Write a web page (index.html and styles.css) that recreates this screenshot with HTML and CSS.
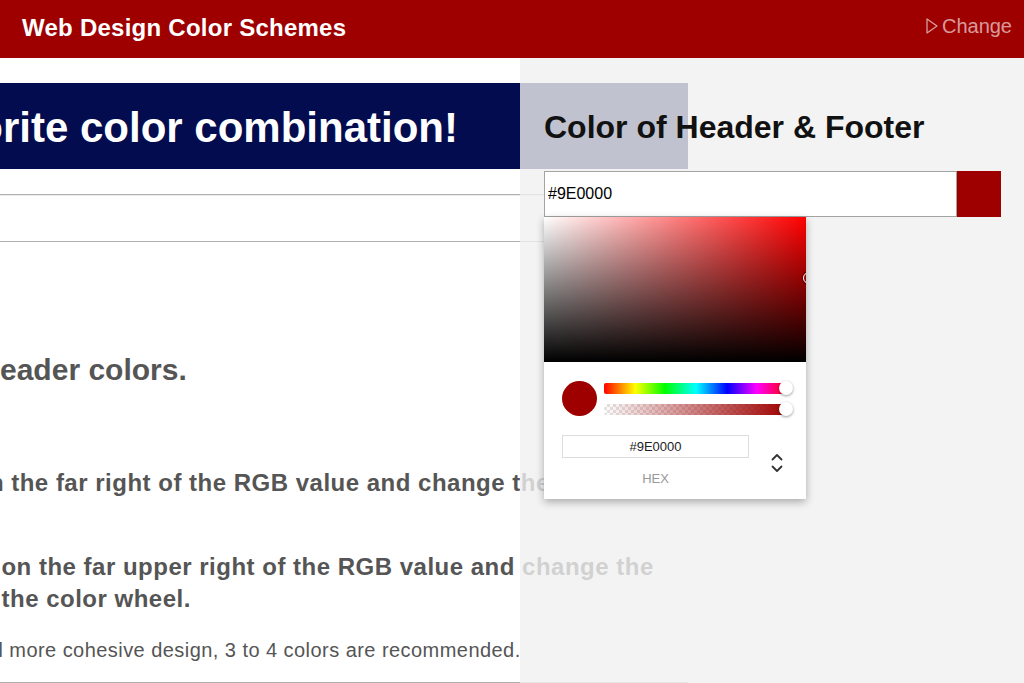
FILE: index.html
```html
<!DOCTYPE html>
<html lang="en">
<head>
<meta charset="utf-8">
<title>Web Design Color Schemes</title>
<link rel="stylesheet" href="styles.css">
</head>
<body>
<header class="topbar">
  <div class="brand">Web Design Color Schemes</div>
  <a class="change" href="#">
    <svg class="change-icon" width="12" height="16" viewBox="0 0 12 16" aria-hidden="true"><path d="M1 1 L11 8 L1 15 Z" fill="none" stroke="currentColor" stroke-width="1.3" stroke-linejoin="round"/></svg>
    <span>Change</span>
  </a>
</header>

<main class="content">
  <div class="banner"><h1 class="banner-title">Find your favorite color combination!</h1></div>
  <div class="field-strip"></div>
  <h2 class="step-title">Change the header colors.</h2>
  <p class="step step-one">Click the arrow on the far right of the RGB value and change the color.</p>
  <p class="step step-two">Or click the icon on the far upper right of the RGB value and change the<br>color with the color wheel.</p>
  <p class="note">For a simpler and more cohesive design, 3 to 4 colors are recommended.</p>
  <hr class="rule">
</main>

<aside class="panel">
  <h2 class="panel-title">Color of Header &amp; Footer</h2>
  <div class="color-field">
    <input class="color-input" type="text" value="#9E0000">
    <div class="color-chip"></div>
    <div class="picker">
      <div class="picker-sv"><span class="sv-handle"></span></div>
      <div class="picker-body">
        <div class="picker-row">
          <div class="picker-dot"></div>
          <div class="picker-sliders">
            <div class="slider slider-hue"><span class="slider-thumb"></span></div>
            <div class="slider slider-alpha"><span class="slider-thumb"></span></div>
          </div>
        </div>
        <div class="hex-row">
          <div class="hex-col">
            <div class="hex-input">#9E0000</div>
            <div class="hex-label">HEX</div>
          </div>
          <svg class="hex-toggle" width="12" height="20" viewBox="0 0 12 20" aria-hidden="true"><path d="M1.5 6.5 L6 2 L10.5 6.5 M1.5 13.5 L6 18 L10.5 13.5" fill="none" stroke="currentColor" stroke-width="1.8" stroke-linecap="round" stroke-linejoin="round"/></svg>
        </div>
      </div>
    </div>
  </div>
</aside>
</body>
</html>
```

FILE: styles.css
```css
* { box-sizing: border-box; }

body {
  margin: 0;
  width: 1024px;
  height: 683px;
  overflow: hidden;
  position: relative;
  background: #fff;
  font-family: "Liberation Sans", Arial, sans-serif;
}

/* Top bar */
.topbar {
  height: 58px;
  background: #9e0000;
  display: flex;
  align-items: center;
  justify-content: space-between;
  padding: 0 12px 2px 22px;
}
.brand {
  color: #fff;
  font-size: 24px;
  font-weight: bold;
  letter-spacing: 0.25px;
}
.change {
  display: flex;
  align-items: center;
  gap: 4px;
  margin-top: -4px;
  color: rgba(255, 255, 255, 0.62);
  font-size: 20px;
  text-decoration: none;
}
.change-icon { display: block; }

/* Left content */
.content {
  width: 688px;
  padding-top: 25px;
}
.banner {
  height: 86px;
  background: #020c4e;
  display: flex;
  align-items: center;
  justify-content: flex-end;
  padding-right: 230px;
}
.banner-title {
  margin: 0;
  padding-top: 3px;
  color: #fff;
  font-size: 42px;
  line-height: 1;
  font-weight: bold;
  white-space: nowrap;
}
.field-strip {
  margin-top: 25px;
  height: 48px;
  border-top: 1px solid #b0b0b0;
  border-bottom: 1px solid #b0b0b0;
  box-shadow: inset 0 1px 0 #ececec;
}
.step-title {
  margin: 110px 0 0 -190px;
  font-size: 30px;
  line-height: 36px;
  font-weight: bold;
  color: #555;
  white-space: nowrap;
}
.step {
  margin: 0;
  font-size: 24px;
  line-height: 32px;
  letter-spacing: 0.5px;
  font-weight: bold;
  color: #555;
  white-space: nowrap;
}
.step-one { margin: 79px 0 0 -213px; }
.step-two { margin: 52px 0 0 -124px; text-indent: -77px; }
.note {
  margin: 21px 0 0 -160px;
  font-size: 20px;
  line-height: 28px;
  letter-spacing: 0.45px;
  color: #555;
  white-space: nowrap;
}
.rule {
  margin: 18px 0 0;
  height: 0;
  border: 0;
  border-top: 1px solid #b0b0b0;
}

/* Right settings panel (overlay) */
.panel {
  position: absolute;
  top: 58px;
  left: 520px;
  right: 0;
  bottom: 0;
  background: rgba(240, 240, 240, 0.8);
  padding: 50px 23px 0 24px;
}
.panel-title {
  margin: 0;
  font-size: 32px;
  line-height: 38px;
  font-weight: bold;
  color: #111;
  white-space: nowrap;
}
.color-field {
  position: relative;
  margin-top: 25px;
  display: flex;
  width: 457px;
  height: 46px;
}
.color-input {
  width: 413px;
  height: 46px;
  margin: 0;
  border: 1px solid #a3a3a3;
  padding: 0 3px;
  font: 16px "Liberation Sans", Arial, sans-serif;
  color: #000;
  background: #fff;
  outline: none;
}
.color-chip {
  width: 44px;
  background: #9e0000;
}

/* Color picker popup */
.picker {
  position: absolute;
  top: 46px;
  left: 0;
  width: 262px;
  background: #fff;
  box-shadow: 0 3px 8px rgba(0, 0, 0, 0.3);
}
.picker-sv {
  position: relative;
  height: 145px;
  overflow: hidden;
  background:
    linear-gradient(to bottom, rgba(0, 0, 0, 0), #000),
    linear-gradient(to right, #fff, #f00);
}
.sv-handle {
  position: absolute;
  left: 259px;
  top: 55px;
  width: 12px;
  height: 12px;
  border-radius: 50%;
  border: 1.5px solid #fff;
  box-shadow: 0 0 1px 1px rgba(0, 0, 0, 0.35);
}
.picker-body {
  padding: 19px 18px 13px;
}
.picker-row {
  display: flex;
  align-items: center;
  gap: 7px;
}
.picker-dot {
  flex: none;
  width: 35px;
  height: 35px;
  border-radius: 50%;
  background: #9e0000;
}
.picker-sliders {
  flex: 1;
  display: flex;
  flex-direction: column;
  gap: 10px;
}
.slider {
  position: relative;
  height: 11px;
  border-radius: 2px;
}
.slider-hue {
  background: linear-gradient(to right, #f00 0%, #ff0 17%, #0f0 33%, #0ff 50%, #00f 67%, #f0f 83%, #f00 100%);
}
.slider-alpha {
  background:
    linear-gradient(to right, rgba(158, 0, 0, 0), #9e0000),
    repeating-conic-gradient(#e4e4e4 0 25%, #fff 0 50%) 0 0 / 6px 6px;
}
.slider-thumb {
  position: absolute;
  right: -5px;
  top: 50%;
  width: 14px;
  height: 14px;
  margin-top: -7px;
  border-radius: 50%;
  background: #fff;
  box-shadow: 0 1px 3px rgba(0, 0, 0, 0.4);
}
.hex-row {
  display: flex;
  margin-top: 19px;
}
.hex-col {
  width: 187px;
  display: flex;
  flex-direction: column;
  align-items: center;
}
.hex-input {
  width: 187px;
  height: 23px;
  border: 1px solid #ddd;
  text-align: center;
  font-size: 13px;
  line-height: 21px;
  color: #222;
}
.hex-label {
  margin-top: 13px;
  font-size: 13px;
  line-height: 15px;
  color: #999;
}
.hex-toggle {
  display: block;
  margin: 18px 0 0 22px;
  color: #333;
}
```
